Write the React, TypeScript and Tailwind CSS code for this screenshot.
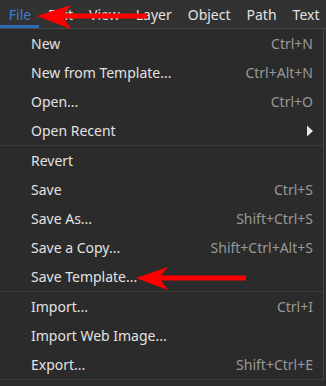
import React from 'react';

type Item = { label: string; shortcut?: string; submenu?: boolean };

const groups: Item[][] = [
  [
    { label: 'New', shortcut: 'Ctrl+N' },
    { label: 'New from Template...', shortcut: 'Ctrl+Alt+N' },
    { label: 'Open...', shortcut: 'Ctrl+O' },
    { label: 'Open Recent', submenu: true },
  ],
  [
    { label: 'Revert' },
    { label: 'Save', shortcut: 'Ctrl+S' },
    { label: 'Save As...', shortcut: 'Shift+Ctrl+S' },
    { label: 'Save a Copy...', shortcut: 'Shift+Ctrl+Alt+S' },
    { label: 'Save Template...' },
  ],
  [
    { label: 'Import...', shortcut: 'Ctrl+I' },
    { label: 'Import Web Image...' },
    { label: 'Export...', shortcut: 'Shift+Ctrl+E' },
  ],
];

const menus = ['Edit', 'View', 'Layer', 'Object', 'Path', 'Text'];

const MenuRow: React.FC<{ item: Item }> = ({ item }) => (
  <div className="h-[29px] flex items-center pl-[31px] pr-[10px]">
    <span className="flex-1 text-[#e2e2e2]">{item.label}</span>
    {item.shortcut && <span className="text-[#999999]">{item.shortcut}</span>}
    {item.submenu && (
      <svg className="w-[8px] h-[12px] -mr-[1px]" viewBox="0 0 8 12">
        <path d="M1 0.5 L7 6 L1 11.5 Z" fill="#e6e6e6" />
      </svg>
    )}
  </div>
);

export default function App() {
  return (
    <div
      className="relative w-[326px] h-[386px] overflow-hidden bg-[#2b2b2b] text-[14px]"
      style={{ fontFamily: '"Noto Sans", "Open Sans", sans-serif' }}
    >
      {/* menu bar */}
      <div className="h-[29px] bg-[#323232] flex items-stretch border-b border-[#474747]">
        <div className="w-[39px] flex items-center justify-center pl-[1px] text-[#3d7ccc] border-b-[3px] border-[#2f6ab8] pt-[4px]">
          File
        </div>
        <div className="flex items-center gap-[16px] pl-[9px] text-[#e2e2e2]">
          {menus.map((m) => (
            <span key={m}>{m}</span>
          ))}
        </div>
      </div>

      {/* dropdown */}
      <div className="w-[324px] border-r border-[#474747] bg-[#2b2b2b]">
        {groups.map((g, gi) => (
          <div key={gi} className="border-b border-[#3c3c3c]">
            {g.map((it) => (
              <MenuRow key={it.label} item={it} />
            ))}
          </div>
        ))}
      </div>

      {/* annotation arrows */}
      <svg className="absolute inset-0 pointer-events-none" width="326" height="386" viewBox="0 0 326 386">
        <polygon
          points="37,16 71,5 64,13.5 147,13.5 147,18.5 64,18.5 71,29"
          fill="#ff0000"
        />
        <polygon
          points="136,278 168,267 161,275.5 246,275.5 246,280.5 161,280.5 168,290"
          fill="#ff0000"
        />
      </svg>
    </div>
  );
}
